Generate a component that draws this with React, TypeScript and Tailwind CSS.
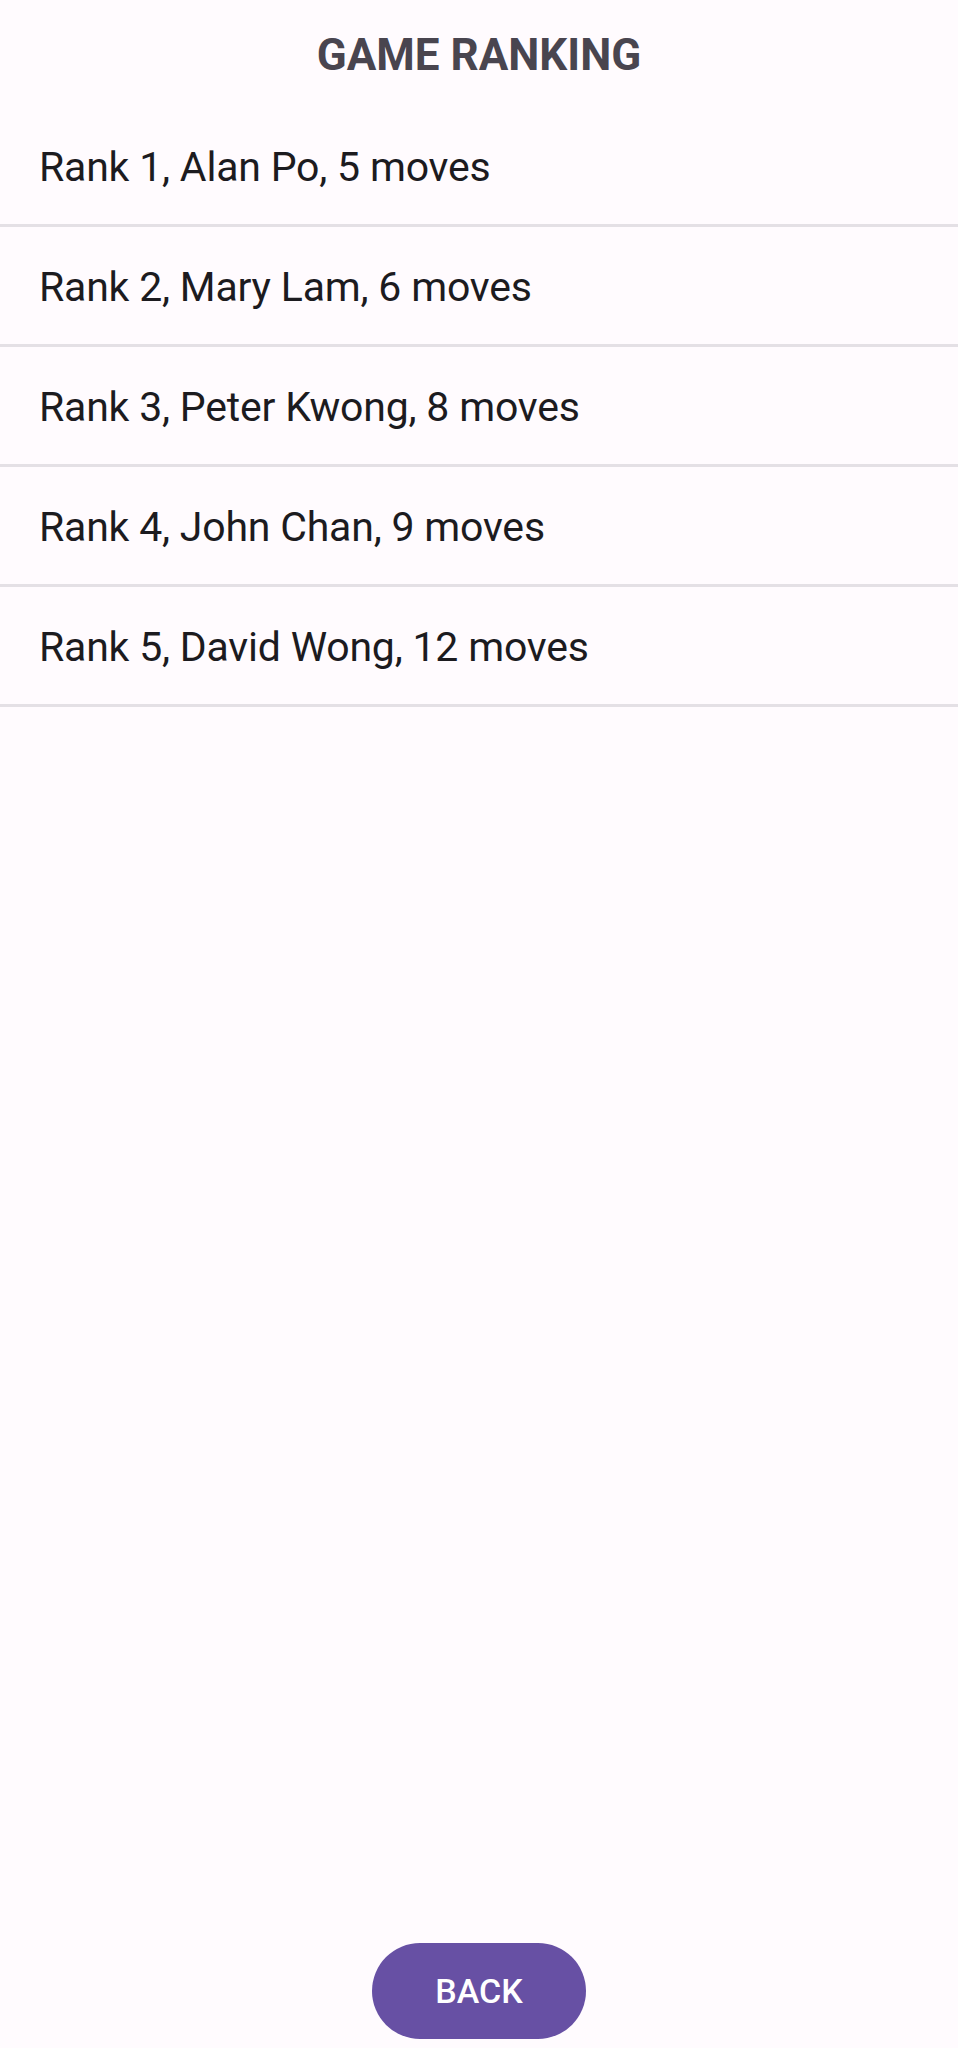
export default function App() {
  const rows = [
    "Rank 1, Alan Po, 5 moves",
    "Rank 2, Mary Lam, 6 moves",
    "Rank 3, Peter Kwong, 8 moves",
    "Rank 4, John Chan, 9 moves",
    "Rank 5, David Wong, 12 moves",
  ];
  return (
    <div
      className="flex h-[2048px] w-full flex-col bg-[#fffbfe]"
      style={{ fontFamily: "Roboto, 'Noto Sans', sans-serif" }}
    >
      <div className="flex h-[107px] items-center justify-center pt-[2px]">
        <h1 className="text-[44px] font-bold text-[#49454f]">GAME RANKING</h1>
      </div>
      <ul>
        {rows.map((r) => (
          <li
            key={r}
            className="flex h-[120px] items-center border-b-[3px] border-[#e4e0e5] pl-[39px] pt-[4px] text-[41px] tracking-[-0.2px] text-[#1c1b1f]"
          >
            {r}
          </li>
        ))}
      </ul>
      <div className="flex-1" />
      <div className="flex justify-center pb-[9px]">
        <button className="flex h-[96px] w-[214px] items-center justify-center rounded-full bg-[#6750a4] text-[34px] font-medium text-white">
          BACK
        </button>
      </div>
    </div>
  );
}
